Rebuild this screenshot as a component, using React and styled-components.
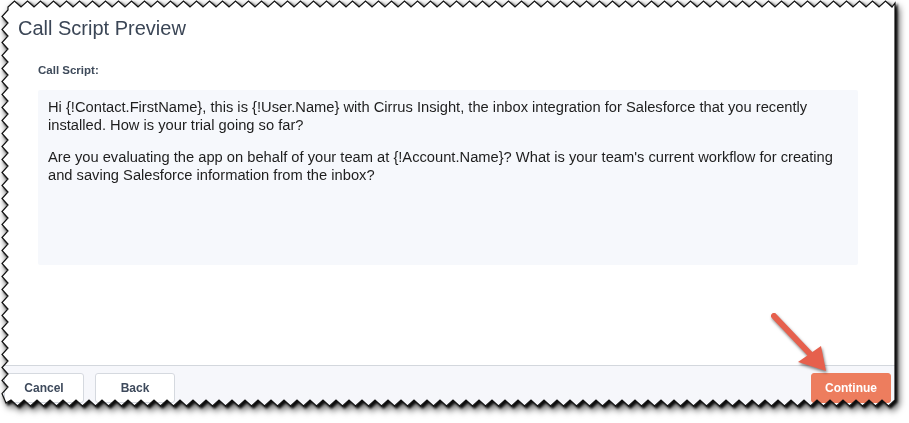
import React from "react"
import styled, { createGlobalStyle } from "styled-components"

const GlobalStyle = createGlobalStyle`
  html, body {
    margin: 0;
    padding: 0;
    background: #ffffff;
  }
  body {
    font-family: "Liberation Sans", Arial, Helvetica, sans-serif;
  }
`

// torn paper edge: zigzag on top, left and bottom, straight on the right
const SHEET_W = 896
const SHEET_H = 408
const tornEdge = () => {
  const L = 8, T = 7, R = 895, B = 400, a = 6, p = 13
  const pts = [[L, T]]
  let x = L
  while (x + p <= R - 2) {
    pts.push([x + p / 2, T - a])
    pts.push([x + p, T])
    x += p
  }
  pts.push([R, T - 4])
  pts.push([R, B])
  x = R
  while (x - p >= L) {
    pts.push([x - p / 2, B + a])
    pts.push([x - p, B])
    x -= p
  }
  pts.push([L - 2, B + 3])
  let y = B
  while (y - p >= T) {
    pts.push([L - a, y - p / 2])
    pts.push([L, y - p])
    y -= p
  }
  pts.push([L, T])
  return pts
}
const EDGE = tornEdge()
const CLIP = EDGE.map(([x, y]) => `${x}px ${y}px`).join(", ")
const EDGE_PATH = "M " + EDGE.map(([x, y]) => `${x} ${y}`).join(" L ") + " Z"

const Stage = styled.div`
  position: relative;
  width: 909px;
  height: 423px;
  overflow: hidden;
`

const Shadowed = styled.div`
  position: relative;
  width: ${SHEET_W}px;
  height: ${SHEET_H}px;
  filter: drop-shadow(2px 2px 1px rgba(0, 0, 0, 0.9)) drop-shadow(2px 3px 3px rgba(0, 0, 0, 0.6));
`

const Sheet = styled.div`
  width: ${SHEET_W}px;
  height: ${SHEET_H}px;
  background: #ffffff;
  clip-path: polygon(${CLIP});
  display: flex;
  flex-direction: column;
`

const Outline = styled.svg`
  position: absolute;
  left: 0;
  top: 0;
  pointer-events: none;
`

const Body = styled.div`
  flex: 1;
  padding: 16px 0 0 18px;
`

const Title = styled.h1`
  margin: 0;
  font-size: 20px;
  line-height: 24px;
  font-weight: 400;
  color: #3b4656;
`

const Field = styled.div`
  margin: 23px 0 0 20px;
  width: 820px;
`

const Label = styled.div`
  font-size: 11.5px;
  line-height: 14px;
  font-weight: 700;
  color: #3e4a5a;
`

const ScriptBox = styled.div`
  margin-top: 13px;
  height: 175px;
  box-sizing: border-box;
  padding: 9px 10px;
  background: #f6f8fc;
  border-radius: 2px;
  font-size: 14.7px;
  line-height: 17.5px;
  color: #1e1e1e;

  p {
    margin: 0 0 15px;
  }
`

const Footer = styled.div`
  height: 43px;
  box-sizing: border-box;
  border-top: 1px solid #d3d7dd;
  background: #f6f7fb;
  padding: 7px 5px 0 4px;
  display: flex;
  justify-content: space-between;
  align-items: flex-start;
`

const Group = styled.div`
  display: flex;
  gap: 11px;
`

const Button = styled.button`
  width: 80px;
  height: 30px;
  box-sizing: border-box;
  border-radius: 3px;
  font-family: inherit;
  font-size: 12px;
  font-weight: 700;
  cursor: pointer;
  border: 1px solid ${p => (p.$primary ? "#ec7d5e" : "#d5d9df")};
  background: ${p => (p.$primary ? "#ed7d5e" : "#ffffff")};
  color: ${p => (p.$primary ? "#ffffff" : "#3e4a5c")};
`

const Arrow = styled.svg`
  position: absolute;
  left: 0;
  top: 0;
  pointer-events: none;
  filter: drop-shadow(1px 2px 1.5px rgba(0, 0, 0, 0.5));
`

const line1 =
  "Hi {!Contact.FirstName}, this is {!User.Name} with Cirrus Insight, the inbox integration for Salesforce that you recently installed. How is your trial going so far?"
const line2 =
  "Are you evaluating the app on behalf of your team at {!Account.Name}? What is your team's current workflow for creating and saving Salesforce information from the inbox?"

export default function App() {
  return (
    <Stage>
      <GlobalStyle />
      <Shadowed>
        <Sheet>
          <Body>
            <Title>Call Script Preview</Title>
            <Field>
              <Label>Call Script:</Label>
              <ScriptBox>
                <p>{line1}</p>
                <p>{line2}</p>
              </ScriptBox>
            </Field>
          </Body>
          <Footer>
            <Group>
              <Button>Cancel</Button>
              <Button>Back</Button>
            </Group>
            <Button $primary>Continue</Button>
          </Footer>
        </Sheet>
        <Outline width={SHEET_W} height={SHEET_H}>
          <path d={EDGE_PATH} fill="none" stroke="#111" strokeWidth="1.2" strokeLinejoin="miter" />
        </Outline>
      </Shadowed>
      <Arrow width="909" height="423">
        <line x1="774" y1="316" x2="812" y2="356" stroke="#e6604d" strokeWidth="6" strokeLinecap="round" />
        <polygon points="826,371 798,362 821,346" fill="#e6604d" />
      </Arrow>
    </Stage>
  )
}
